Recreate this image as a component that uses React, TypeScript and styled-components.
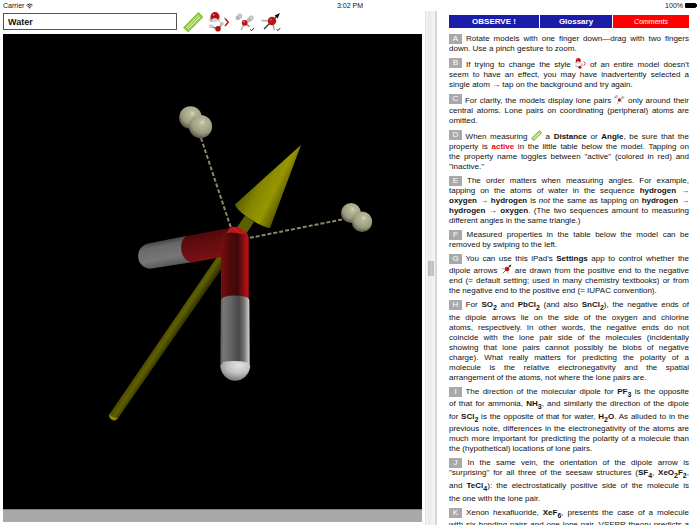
import React from "react";
import styled, { createGlobalStyle } from "styled-components";

const GlobalStyle = createGlobalStyle`
  * { box-sizing: border-box; }
  html, body, #root { height: 100%; }
  body {
    margin: 0;
    background: #fff;
    color: #111;
    font-family: "Liberation Sans", Arial, Helvetica, sans-serif;
    overflow: hidden;
  }
`;

const Page = styled.div`
  display: flex;
  flex-direction: column;
  height: 100vh;
`;

const StatusBar = styled.header`
  display: grid;
  grid-template-columns: 1fr auto 1fr;
  align-items: center;
  height: 11px;
  padding: 0 3px;
  font-size: 7px;
  line-height: 11px;
`;

const StatusGroup = styled.div<{ $end?: boolean }>`
  display: flex;
  align-items: center;
  gap: 2px;
  justify-content: ${(p) => (p.$end ? "flex-end" : "flex-start")};
`;

const Clock = styled.time`
  font-weight: 500;
`;

const Split = styled.main`
  flex: 1;
  min-height: 0;
  display: grid;
  grid-template-columns: minmax(0, 425fr) 12px minmax(0, 263fr);
`;

const ModelPane = styled.section`
  display: flex;
  flex-direction: column;
  min-height: 0;
  padding: 0 3px 3px;
`;

const Toolbar = styled.div`
  display: flex;
  align-items: center;
  gap: 6px;
  height: 23px;
  padding-bottom: 2px;
`;

const MoleculeName = styled.input`
  width: 174px;
  height: 17px;
  margin: 0;
  padding: 0 4px;
  border: 1px solid #555;
  border-radius: 0;
  background: #fff;
  color: #111;
  font: bold 9px "Liberation Sans", Arial, sans-serif;
  outline: none;
`;

const ToolButton = styled.button`
  display: flex;
  width: 20px;
  height: 20px;
  padding: 0;
  border: 0;
  background: none;
`;

const Viewer = styled.div`
  flex: 1;
  min-height: 0;
  background: #000;
`;

const MeasureStrip = styled.div`
  height: 13px;
  background: #a9a9a9;
  border-top: 1px solid #808080;
`;

const Splitter = styled.div`
  display: flex;
  align-items: center;
  justify-content: center;
  border-left: 1px solid #e4e4e4;
  border-right: 2px solid #d6d6d6;
  background: linear-gradient(90deg, #f4f4f4, #e9e9e9 35%, #f7f7f7);
`;

const Grip = styled.span`
  width: 6px;
  height: 15px;
  background: linear-gradient(90deg, #b4b4b4, #cacaca, #b9b9b9);
`;

const NotesPane = styled.section`
  min-height: 0;
  overflow: hidden;
  padding: 4px 11px 0 12px;
`;

const Tabs = styled.nav`
  display: grid;
  grid-template-columns: 90fr 72fr 76fr;
  gap: 1px;
  margin-bottom: 6px;
`;

const Tab = styled.button<{ $current?: boolean }>`
  height: 13px;
  padding: 0;
  border: 0;
  background: ${(p) => (p.$current ? "#ff0000" : "#1c1caa")};
  color: #fff;
  font-family: inherit;
  font-size: ${(p) => (p.$current ? "7px" : "8px")};
  font-style: ${(p) => (p.$current ? "italic" : "normal")};
  font-weight: ${(p) => (p.$current ? "normal" : "bold")};
  line-height: 13px;
`;

const NoteText = styled.p`
  margin: 0 0 4px;
  font-size: 8px;
  line-height: 10px;

  sub {
    font-size: 7px;
    line-height: 10px;
  }
`;

const Line = styled.span<{ $full: boolean }>`
  display: block;
  text-align: justify;
  text-align-last: ${(p) => (p.$full ? "justify" : "left")};
`;

const Letter = styled.span`
  display: inline-block;
  width: 13px;
  height: 10px;
  background: #a9a9a9;
  color: #fff;
  text-align: center;
  text-align-last: center;
  vertical-align: top;
`;

const InlineIcon = styled.span`
  display: inline-block;
  width: 11px;
  height: 11px;
  vertical-align: text-bottom;

  svg { display: block; }
`;

const Active = styled.b`
  color: #ff0000;
`;

type NoteProps = { letter: string; lines: React.ReactNode[]; continues?: boolean };

const Note = ({ letter, lines, continues = false }: NoteProps) => (
  <NoteText>
    {lines.map((line, i) => (
      <Line key={i} $full={continues || i < lines.length - 1}>
        {i === 0 && <><Letter>{letter}</Letter>{" "}</>}
        {line}{" "}
      </Line>
    ))}
  </NoteText>
);

const RulerIcon = () => (
  <svg width="100%" height="100%" viewBox="0 0 20 20" aria-hidden="true">
    <path d="M1.5 15.5 L15.5 1.5 L19 5 L5 19 Z" fill="#fff" stroke="#8cc63a" strokeWidth="2.2" />
    <path d="M4 16.5 L16.8 3.6" stroke="#8cc63a" strokeWidth="1.4" />
  </svg>
);

const StyleIcon = () => (
  <svg width="100%" height="100%" viewBox="0 0 20 20" aria-hidden="true">
    <circle cx="3" cy="7.5" r="2.6" fill="#bbb" />
    <circle cx="9.3" cy="7.5" r="2.6" fill="#ddd" />
    <circle cx="6" cy="4.6" r="4.5" fill="#b50d12" />
    <path d="M2.6 8.2a3.6 3.6 0 0 1 6.6 0 3.6 3.6 0 0 1-6.6 0Z" fill="#d5d5d5" />
    <circle cx="4.6" cy="2.8" r="1" fill="#ee8080" />
    <path d="M2 14.5 L9 17 L13 12" stroke="#888" strokeWidth="1.6" fill="none" />
    <circle cx="2" cy="14.3" r="2" fill="#ccc" />
    <circle cx="12.8" cy="11.8" r="2.1" fill="#c6c6c6" />
    <circle cx="9" cy="16.8" r="2.8" fill="#b50d12" />
    <path d="M15.2 5.5 L17.5 8" stroke="#999" strokeWidth="1.2" />
    <path d="M16.6 7 L19.2 10.3 L16 14" stroke="#c9181c" strokeWidth="1.6" fill="none" />
  </svg>
);

const LonePairIcon = ({ check = false }: { check?: boolean }) => (
  <svg width="100%" height="100%" viewBox="0 0 20 20" aria-hidden="true">
    <path d="M9.5 11 L6.2 18" stroke="#aaa" strokeWidth="1.4" />
    <path d="M9.5 11 L14.5 14.5" stroke="#999" strokeWidth="1.6" />
    <path d="M9 10 L4 5 M10 10 L15 7" stroke="#999" strokeWidth="0.6" strokeDasharray="1 1" />
    <circle cx="2.8" cy="6" r="2.2" fill="#b5b5b5" />
    <circle cx="4.8" cy="4" r="2.2" fill="#cdcdcd" stroke="#999" strokeWidth="0.5" />
    <circle cx="14" cy="8" r="2.2" fill="#b5b5b5" />
    <circle cx="16.2" cy="6" r="2.2" fill="#cdcdcd" stroke="#999" strokeWidth="0.5" />
    <circle cx="9.7" cy="10.8" r="2.9" fill="#b9141a" />
    <circle cx="9" cy="9.8" r="0.9" fill="#e76" />
    {check && <path d="M15.5 17.3 L16.5 18.7 L19 16" stroke="#222" strokeWidth="1" fill="none" />}
  </svg>
);

const DipoleIcon = ({ check = false }: { check?: boolean }) => (
  <svg width="100%" height="100%" viewBox="0 0 20 20" aria-hidden="true">
    <path d="M11 9 L0.5 8.6" stroke="#aaa" strokeWidth="1.5" />
    <path d="M11 10 L13.5 18" stroke="#aaa" strokeWidth="1.5" />
    <path d="M3 17 L16 4" stroke="#333" strokeWidth="1.2" />
    <path d="M19 1 L13.6 3.4 L16.6 6.4 Z" fill="#111" />
    <circle cx="11" cy="9" r="4.2" fill="#b9141a" />
    <circle cx="9.8" cy="7.6" r="1.1" fill="#e55" />
    {check && <path d="M15.8 17.3 L16.8 18.7 L19.3 16" stroke="#222" strokeWidth="1" fill="none" />}
  </svg>
);

const WifiIcon = () => (
  <svg width="7" height="6" viewBox="0 0 14 11" aria-hidden="true">
    <path d="M1 4 Q7 -1.5 13 4" stroke="#222" strokeWidth="2" fill="none" />
    <path d="M3.4 6.6 Q7 3.3 10.6 6.6" stroke="#222" strokeWidth="2" fill="none" />
    <path d="M5 8.4 Q7 6.8 9 8.4 L7 10.8Z" fill="#222" />
  </svg>
);

const BatteryIcon = () => (
  <svg width="12" height="5" viewBox="0 0 12 5" aria-hidden="true">
    <rect width="11" height="5" rx="1" fill="#000" />
    <rect x="11" y="1" width="1" height="3" fill="#000" />
  </svg>
);

const WaterModel = () => (
  <svg width="100%" height="100%" viewBox="3 34 419 475" role="img" aria-label="Water molecule with dipole arrow" display="block">
    <defs>
      <radialGradient id="pair" cx="0.58" cy="0.32" r="0.72">
        <stop offset="0" stopColor="#dcdcc6" />
        <stop offset="0.15" stopColor="#b9b99c" />
        <stop offset="0.65" stopColor="#9b9b80" />
        <stop offset="1" stopColor="#4c4c3c" />
      </radialGradient>
      <linearGradient id="cone" gradientUnits="userSpaceOnUse" x1="247" y1="186" x2="283" y2="204">
        <stop offset="0" stopColor="#636300" />
        <stop offset="0.3" stopColor="#858500" />
        <stop offset="0.65" stopColor="#979700" />
        <stop offset="1" stopColor="#565600" />
      </linearGradient>
      <linearGradient id="shaft" gradientUnits="userSpaceOnUse" x1="176" y1="315" x2="185" y2="321">
        <stop offset="0" stopColor="#4a4a00" />
        <stop offset="0.45" stopColor="#606000" />
        <stop offset="1" stopColor="#353500" />
      </linearGradient>
      <linearGradient id="redRod" x1="0" x2="1">
        <stop offset="0" stopColor="#780e10" />
        <stop offset="0.3" stopColor="#520a0b" />
        <stop offset="0.6" stopColor="#3e0808" />
        <stop offset="0.67" stopColor="#5c0a0c" />
        <stop offset="0.94" stopColor="#b51418" />
        <stop offset="1" stopColor="#6b0b0d" />
      </linearGradient>
      <linearGradient id="greyRod" x1="0" x2="1">
        <stop offset="0" stopColor="#555" />
        <stop offset="0.1" stopColor="#777" />
        <stop offset="0.35" stopColor="#656565" />
        <stop offset="0.62" stopColor="#474747" />
        <stop offset="0.8" stopColor="#747474" />
        <stop offset="0.95" stopColor="#c4c4c4" />
        <stop offset="1" stopColor="#777" />
      </linearGradient>
      <linearGradient id="sideGrey" gradientUnits="userSpaceOnUse" x1="164" y1="240" x2="169" y2="267">
        <stop offset="0" stopColor="#444" />
        <stop offset="0.2" stopColor="#696969" />
        <stop offset="0.65" stopColor="#777" />
        <stop offset="1" stopColor="#555" />
      </linearGradient>
      <linearGradient id="sideRed" gradientUnits="userSpaceOnUse" x1="205" y1="231" x2="210" y2="260">
        <stop offset="0" stopColor="#4d0709" />
        <stop offset="0.3" stopColor="#5e0c0e" />
        <stop offset="0.75" stopColor="#701012" />
        <stop offset="1" stopColor="#840f12" />
      </linearGradient>
      <radialGradient id="cap" cx="0.62" cy="0.22" r="0.8">
        <stop offset="0" stopColor="#e2e2e2" />
        <stop offset="0.5" stopColor="#c2c2c2" />
        <stop offset="1" stopColor="#777" />
      </radialGradient>
    </defs>

    <path d="M245 216 L254 222 L117.5 419 A4.8 4.8 0 0 1 109.5 414 Z" fill="url(#shaft)" />
    <path d="M109.5 414 Q112 418 118 418 A4.8 4.8 0 0 1 109.5 414Z" fill="#8c8c00" />
    <path d="M245 216 L254 222 L243 238 L233 233Z" fill="#5e5e00" />
    <path d="M301 145 L235 204.5 Q236 209 247 217 Q262 227 270 228 Z" fill="url(#cone)" />

    <path d="M201 138 L232 231 M342 219.5 L249 238" stroke="#88886e" strokeWidth="2" strokeDasharray="4 2" fill="none" />

    <circle cx="190.5" cy="117.5" r="11.3" fill="url(#pair)" />
    <circle cx="200.5" cy="126.5" r="11.6" fill="url(#pair)" />
    <circle cx="351" cy="213" r="10" fill="url(#pair)" />
    <circle cx="362" cy="221.8" r="10.2" fill="url(#pair)" />

    <path d="M186 236 L148 243.5 C134 247 135 267 150 268.8 L193 262 Z" fill="url(#sideGrey)" />
    <path d="M232 227.5 L187 236 C178 240 179 260 192 262.5 L222 257 L236 240Z" fill="url(#sideRed)" />

    <path d="M221 240 Q222 233 227 232 L244 232 Q249 233 249 240 V302 H221 Z" fill="url(#redRod)" />
    <path d="M225.5 233.5 L230 228 Q236 225.5 240 228.5 L248 233.5 Q242 235 236 233 Q229 232 225.5 233.5Z" fill="#b9171b" />
    <path d="M229 231 L232 227.5 L236 230 L239 233" fill="none" stroke="#df2529" strokeWidth="1" />
    <path d="M220.8 300 Q222 295.5 235 295.5 Q248 295.5 249.5 300 L250 367 H220.3 Z" fill="url(#greyRod)" />
    <path d="M220.3 366 L223.5 361.8 Q236 360 247.5 362.5 L250.2 366 A15 16 0 0 1 220.3 366Z" fill="url(#cap)" />
  </svg>
);

export default function App() {
  return (
    <>
      <GlobalStyle />
      <Page>
        <StatusBar>
          <StatusGroup>
            <span>Carrier</span>
            <WifiIcon />
          </StatusGroup>
          <Clock>3:02 PM</Clock>
          <StatusGroup $end>
            <span>100%</span>
            <BatteryIcon />
          </StatusGroup>
        </StatusBar>
        <Split>
          <ModelPane>
            <Toolbar>
              <MoleculeName aria-label="Molecule" defaultValue="Water" />
              <ToolButton aria-label="Measure"><RulerIcon /></ToolButton>
              <ToolButton aria-label="Model style"><StyleIcon /></ToolButton>
              <ToolButton aria-label="Lone pairs"><LonePairIcon check /></ToolButton>
              <ToolButton aria-label="Dipole arrow"><DipoleIcon check /></ToolButton>
            </Toolbar>
            <Viewer><WaterModel /></Viewer>
            <MeasureStrip />
          </ModelPane>
          <Splitter><Grip /></Splitter>
          <NotesPane>
            <Tabs>
              <Tab>OBSERVE !</Tab>
              <Tab>Glossary</Tab>
              <Tab $current>Comments</Tab>
            </Tabs>
            <Note
              letter="A"
              lines={[
                "Rotate models with one finger down—drag with two fingers",
                "down. Use a pinch gesture to zoom.",
              ]}
            />
            <Note
              letter="B"
              lines={[
                <>If trying to change the style <InlineIcon><StyleIcon /></InlineIcon> of an entire model doesn't</>,
                "seem to have an effect, you may have inadvertently selected a",
                "single atom → tap on the background and try again.",
              ]}
            />
            <Note
              letter="C"
              lines={[
                <>For clarity, the models display lone pairs <InlineIcon><LonePairIcon /></InlineIcon> only around their</>,
                "central atoms. Lone pairs on coordinating (peripheral) atoms are",
                "omitted.",
              ]}
            />
            <Note
              letter="D"
              lines={[
                <>When measuring <InlineIcon><RulerIcon /></InlineIcon> a <b>Distance</b> or <b>Angle</b>, be sure that the</>,
                <>property is <Active>active</Active> in the little table below the model. Tapping on</>,
                'the property name toggles between "active" (colored in red) and',
                '"inactive."',
              ]}
            />
            <Note
              letter="E"
              lines={[
                "The order matters when measuring angles. For example,",
                <>tapping on the atoms of water in the sequence <b>hydrogen →</b></>,
                <><b>oxygen → hydrogen</b> is <i>not</i> the same as tapping on <b>hydrogen →</b></>,
                <><b>hydrogen → oxygen</b>. (The two sequences amount to measuring</>,
                "different angles in the same triangle.)",
              ]}
            />
            <Note
              letter="F"
              lines={[
                "Measured properties in the table below the model can be",
                "removed by swiping to the left.",
              ]}
            />
            <Note
              letter="G"
              lines={[
                <>You can use this iPad's <b>Settings</b> app to control whether the</>,
                <>dipole arrows <InlineIcon><DipoleIcon /></InlineIcon> are drawn from the positive end to the negative</>,
                "end (= default setting; used in many chemistry textbooks) or from",
                "the negative end to the positive end (= IUPAC convention).",
              ]}
            />
            <Note
              letter="H"
              lines={[
                <>For <b>SO<sub>2</sub></b> and <b>PbCl<sub>2</sub></b> (and also <b>SnCl<sub>2</sub></b>), the negative ends of</>,
                "the dipole arrows lie on the side of the oxygen and chlorine",
                "atoms, respectively. In other words, the negative ends do not",
                "coincide with the lone pair side of the molecules (incidentally",
                "showing that lone pairs cannot possibly be blobs of negative",
                "charge). What really matters for predicting the polarity of a",
                "molecule is the relative electronegativity and the spatial",
                "arrangement of the atoms, not where the lone pairs are.",
              ]}
            />
            <Note
              letter="I"
              lines={[
                <>The direction of the molecular dipole for <b>PF<sub>3</sub></b> is the opposite</>,
                <>of that for ammonia, <b>NH<sub>3</sub></b>, and similarly the direction of the dipole</>,
                <>for <b>SCl<sub>2</sub></b> is the opposite of that for water, <b>H<sub>2</sub>O</b>. As alluded to in the</>,
                "previous note, differences in the electronegativity of the atoms are",
                "much more important for predicting the polarity of a molecule than",
                "the (hypothetical) locations of lone pairs.",
              ]}
            />
            <Note
              letter="J"
              lines={[
                "In the same vein, the orientation of the dipole arrow is",
                <>"surprising" for all three of the seesaw structures (<b>SF<sub>4</sub></b>, <b>XeO<sub>2</sub>F<sub>2</sub></b>,</>,
                <>and <b>TeCl<sub>4</sub></b>): the electrostatically positive side of the molecule is</>,
                "the one with the lone pair.",
              ]}
            />
            <Note
              letter="K"
              continues
              lines={[
                <>Xenon hexafluoride, <b>XeF<sub>6</sub></b>, presents the case of a molecule</>,
                "with six bonding pairs and one lone pair. VSEPR theory predicts a",
              ]}
            />
          </NotesPane>
        </Split>
      </Page>
    </>
  );
}
